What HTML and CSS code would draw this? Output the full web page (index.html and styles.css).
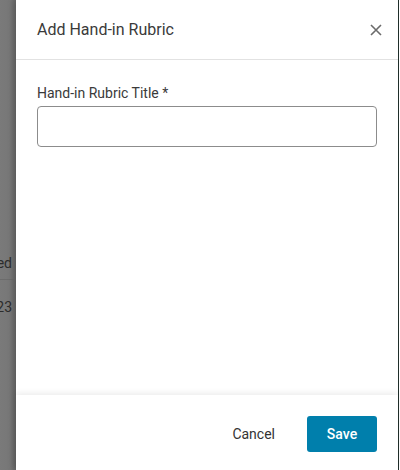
FILE: index.html
```
<!DOCTYPE html>
<html>
<head>
<meta charset="utf-8">
<link rel="stylesheet" href="styles.css">
</head>
<body>
<div class="screen">
  <div class="backdrop">
    <div class="bg-row bg-head"><span>Submitted</span></div>
    <div class="bg-row"><span>01/05/2023</span></div>
  </div>
  <div class="panel">
    <div class="panel-inner">
      <div class="header">
        <h1 class="title">Add Hand-in Rubric</h1>
        <button class="close" aria-label="Close">
          <svg width="12" height="12" viewBox="0 0 12 12"><path d="M1 1L11 11M11 1L1 11" stroke="#6b6b6b" stroke-width="1.6" fill="none"/></svg>
        </button>
      </div>
      <div class="body">
        <label class="label" for="t">Hand-in Rubric Title *</label>
        <input class="input" id="t" type="text">
      </div>
      <div class="footer">
        <button class="btn-cancel">Cancel</button>
        <button class="btn-save">Save</button>
      </div>
    </div>
  </div>
</div>
</body>
</html>
```
FILE: styles.css
```
* { box-sizing: border-box; }
html, body { margin: 0; padding: 0; }
body {
  font-family: Roboto, "Liberation Sans", sans-serif;
  width: 400px;
  height: 470px;
  overflow: hidden;
  background: #fff;
}
.screen {
  display: flex;
  height: 470px;
}
.backdrop {
  width: 16px;
  flex: none;
  background: linear-gradient(to right, #7a7a7a 0, #777 10px, #6a6a6a 16px);
  overflow: hidden;
  padding-top: 246px;
}
.bg-row {
  display: flex;
  justify-content: flex-end;
  padding-right: 4px;
  font-size: 14px;
  line-height: 20px;
  color: #2c2c2c;
  white-space: nowrap;
  height: 34px;
  align-items: center;
}
.bg-head {
  border-bottom: 1px solid #6c6c6c;
}
.bg-row + .bg-row {
  height: 54px;
}
.panel {
  flex: 1;
  background: #fff;
  padding-right: 1px;
  box-shadow: -3px 0 6px rgba(0,0,0,0.15);
  display: flex;
}
.panel-inner {
  flex: 1;
  display: flex;
  flex-direction: column;
  border-right: 1px solid #1f2e2a;
}
.header {
  height: 60px;
  border-bottom: 1px solid #e2e2e2;
  display: flex;
  align-items: center;
  justify-content: space-between;
  padding: 0 16px 0 21px;
}
.title {
  margin: 0;
  font-size: 16px;
  font-weight: 400;
  color: #3a3a3a;
}
.close {
  border: 0;
  background: none;
  padding: 0;
  width: 12px;
  height: 12px;
  display: flex;
  margin-top: 1px;
}
.body {
  flex: 1;
  padding: 23px 21px 0 21px;
  display: flex;
  flex-direction: column;
}
.label {
  font-size: 14px;
  line-height: 20px;
  color: #3a3a3a;
  margin-bottom: 3px;
}
.input {
  width: 340px;
  height: 41px;
  border: 1px solid #8c8c8c;
  border-radius: 4px;
  font: inherit;
  outline: none;
}
.footer {
  height: 75px;
  flex: none;
  box-shadow: 0 -2px 6px rgba(0,0,0,0.08);
  display: flex;
  justify-content: flex-end;
  align-items: center;
  gap: 16px;
  padding: 3px 21px 0 0;
}
.btn-cancel {
  border: 0;
  background: none;
  font-family: inherit;
  font-size: 14px;
  color: #333;
  padding: 0 16px;
  height: 36px;
}
.btn-save {
  border: 0;
  background: #007fac;
  color: #fff;
  font-family: inherit;
  font-size: 14px;
  font-weight: 500;
  width: 70px;
  height: 36px;
  border-radius: 3px;
}
```
